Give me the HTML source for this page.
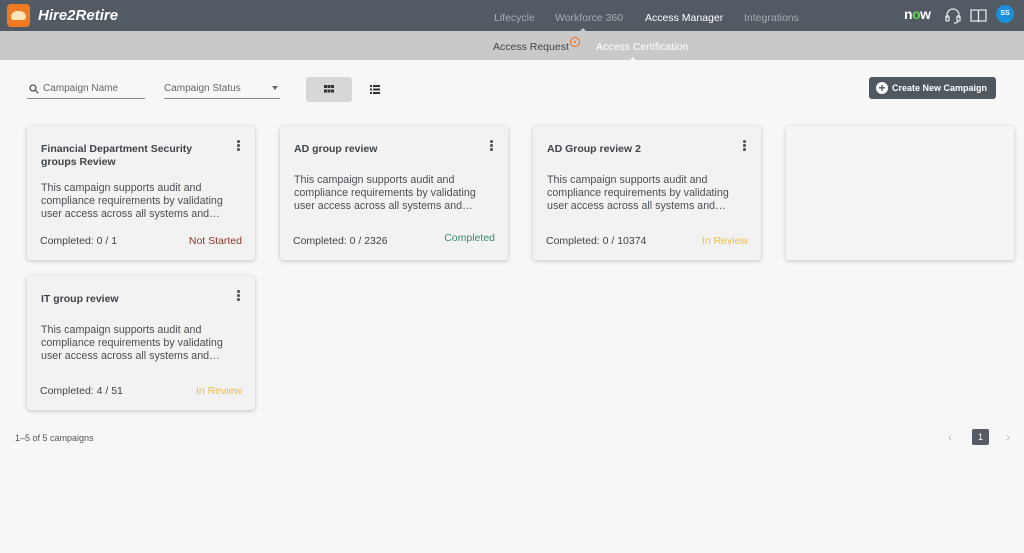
<!DOCTYPE html>
<html><head><style>
*{box-sizing:border-box;margin:0;padding:0}
body{width:1024px;height:553px;background:#f7f7f7;font-family:"Liberation Sans",sans-serif;position:relative;overflow:hidden}
.top{position:absolute;left:0;top:0;width:1024px;height:31px;background:#525a63}
.sub{position:absolute;left:0;top:31px;width:1024px;height:29px;background:#c9c9c9}
.abs{position:absolute}
.nav{color:#a6acb2;font-size:10.5px;top:12px}
.card{position:absolute;width:228px;height:134px;background:#f2f2f2;border-radius:3px;box-shadow:0 1px 4px rgba(0,0,0,.22)}
.card h3{position:absolute;left:14px;top:17px;width:180px;font-size:10.5px;line-height:13px;color:#3e444a;font-weight:bold}
.card .d{position:absolute;left:14px;width:200px;font-size:10.7px;line-height:13px;color:#4a4f55}
.card .c{position:absolute;left:13px;bottom:13px;font-size:10.5px;color:#3e444a}
.card .s{position:absolute;right:13px;bottom:13px;font-size:10.5px}
.dots{position:absolute;right:15px;top:14px;width:3px}
.dots i{display:block;width:2.5px;height:2.5px;background:#555;border-radius:50%;margin-bottom:1.5px}
</style></head><body>
<div class="top"></div>
<div class="abs" style="left:7px;top:4px;width:23px;height:23px;background:#ef7a22;border-radius:4px"></div>
<div class="abs" style="left:11px;top:11px;width:15px;height:9px;background:#fde7b8;border-radius:6px 6px 3px 3px"></div>
<div class="abs" style="left:38px;top:7px;color:#fff;font-size:15px;font-weight:bold;font-style:italic">Hire2Retire</div>
<div class="abs nav" style="left:494px">Lifecycle</div>
<div class="abs nav" style="left:555px">Workforce 360</div>
<div class="abs nav" style="left:645px;color:#fff">Access Manager</div>
<div class="abs nav" style="left:744px">Integrations</div>
<div class="abs" style="left:904px;top:6px;color:#fff;font-size:14px;font-weight:bold;letter-spacing:-0.5px">n<span style="color:#62d84e">o</span>w</div>
<svg class="abs" style="left:944px;top:7px" width="18" height="18" viewBox="0 0 18 18" fill="none" stroke="#e6e8ea" stroke-width="1.3"><path d="M3 11V8a6 6 0 0112 0v3"/><rect x="2" y="9" width="3" height="5" rx="1"/><rect x="13" y="9" width="3" height="5" rx="1"/><path d="M14 14q0 2-4 2"/></svg>
<svg class="abs" style="left:970px;top:8px" width="17" height="15" viewBox="0 0 17 15" fill="none" stroke="#e6e8ea" stroke-width="1.3"><path d="M1 2h6q1.5 0 1.5 1.5V14q0-1-1.5-1H1zM16 2h-6q-1.5 0-1.5 1.5V14q0-1 1.5-1h6z"/></svg>
<div class="abs" style="left:996px;top:5px;width:18px;height:18px;border-radius:50%;background:#1d8fd8;color:#fff;font-size:7px;font-weight:bold;text-align:center;line-height:18px">SS</div>
<div class="abs" style="top:25px;left:580px;border:3px solid transparent;border-bottom-color:#c9c9c9"></div>
<div class="sub"></div>
<div class="abs" style="left:493px;top:41px;font-size:10.5px;color:#3e444a">Access Request</div>
<div class="abs" style="left:570px;top:37px;width:10px;height:10px;border:1.3px solid #ef6c1a;border-radius:50%"></div>
<div class="abs" style="left:574px;top:41px;width:2px;height:2px;background:#ef6c1a;border-radius:50%"></div>
<div class="abs" style="left:596px;top:41px;font-size:10.5px;color:#fff">Access Certification</div>
<div class="abs" style="left:630px;top:54px;border:3px solid transparent;border-bottom-color:#f7f7f7"></div>
<svg class="abs" style="left:29px;top:84px" width="10" height="10" viewBox="0 0 10 10" fill="none" stroke="#555" stroke-width="1.3"><circle cx="4" cy="4" r="3"/><path d="M6.3 6.3L9.3 9.3"/></svg>
<div class="abs" style="left:43px;top:83px;font-size:10px;color:#666">Campaign Name</div>
<div class="abs" style="left:27px;top:98px;width:118px;height:1px;background:#888"></div>
<div class="abs" style="left:164px;top:83px;font-size:10px;color:#666">Campaign Status</div>
<div class="abs" style="left:272px;top:86px;border:3px solid transparent;border-top:4px solid #666"></div>
<div class="abs" style="left:164px;top:98px;width:116px;height:1px;background:#888"></div>
<div class="abs" style="left:306px;top:77px;width:46px;height:25px;background:#d7d7d7;border-radius:3px"></div>
<svg class="abs" style="left:324px;top:85px" width="10" height="8"><g fill="#333"><rect x="0" y="0" width="3" height="3"/><rect x="3.5" y="0" width="3" height="3"/><rect x="7" y="0" width="3" height="3"/><rect x="0" y="4.5" width="3" height="3"/><rect x="3.5" y="4.5" width="3" height="3"/><rect x="7" y="4.5" width="3" height="3"/></g></svg>
<svg class="abs" style="left:370px;top:85px" width="10" height="9"><g fill="#333"><rect x="0" y="0" width="2" height="2"/><rect x="3" y="0" width="7" height="2"/><rect x="0" y="3.5" width="2" height="2"/><rect x="3" y="3.5" width="7" height="2"/><rect x="0" y="7" width="2" height="2"/><rect x="3" y="7" width="7" height="2"/></g></svg>
<div class="abs" style="left:869px;top:77px;width:127px;height:22px;background:#4f575f;border-radius:3px;color:#fff;font-size:9px;font-weight:bold;line-height:22px;padding-left:23px">Create New Campaign</div>
<div class="abs" style="left:876px;top:82px;width:12px;height:12px;background:#fff;border-radius:50%;color:#4f575f;font-size:12px;font-weight:bold;line-height:12px;text-align:center">+</div>

<div class="card" style="left:27px;top:126px"><h3>Financial Department Security groups Review</h3><div class="dots"><i></i><i></i><i></i></div><div class="d" style="top:56px">This campaign supports audit and compliance requirements by validating user access across all systems and…</div><div class="c">Completed: 0 / 1</div><div class="s" style="color:#8a3b2a">Not Started</div></div>
<div class="card" style="left:280px;top:126px"><h3>AD group review</h3><div class="dots"><i></i><i></i><i></i></div><div class="d" style="top:48px">This campaign supports audit and compliance requirements by validating user access across all systems and…</div><div class="c">Completed: 0 / 2326</div><div class="s" style="color:#3f8a6a;bottom:16px">Completed</div></div>
<div class="card" style="left:533px;top:126px"><h3>AD Group review 2</h3><div class="dots"><i></i><i></i><i></i></div><div class="d" style="top:48px">This campaign supports audit and compliance requirements by validating user access across all systems and…</div><div class="c">Completed: 0 / 10374</div><div class="s" style="color:#f3be3c">In Review</div></div>
<div class="card" style="left:786px;top:126px;background:#f5f5f5"></div>
<div class="card" style="left:27px;top:276px"><h3>IT group review</h3><div class="dots"><i></i><i></i><i></i></div><div class="d" style="top:48px">This campaign supports audit and compliance requirements by validating user access across all systems and…</div><div class="c">Completed: 4 / 51</div><div class="s" style="color:#f3be3c">In Review</div></div>

<div class="abs" style="left:15px;top:433px;font-size:9px;color:#555">1–5 of 5 campaigns</div>
<div class="abs" style="left:948px;top:430px;font-size:12px;color:#bbb">‹</div>
<div class="abs" style="left:972px;top:429px;width:17px;height:16px;background:#555c63;border-radius:2px;color:#fff;font-size:9px;text-align:center;line-height:16px">1</div>
<div class="abs" style="left:1006px;top:430px;font-size:12px;color:#bbb">›</div>
</body></html>
